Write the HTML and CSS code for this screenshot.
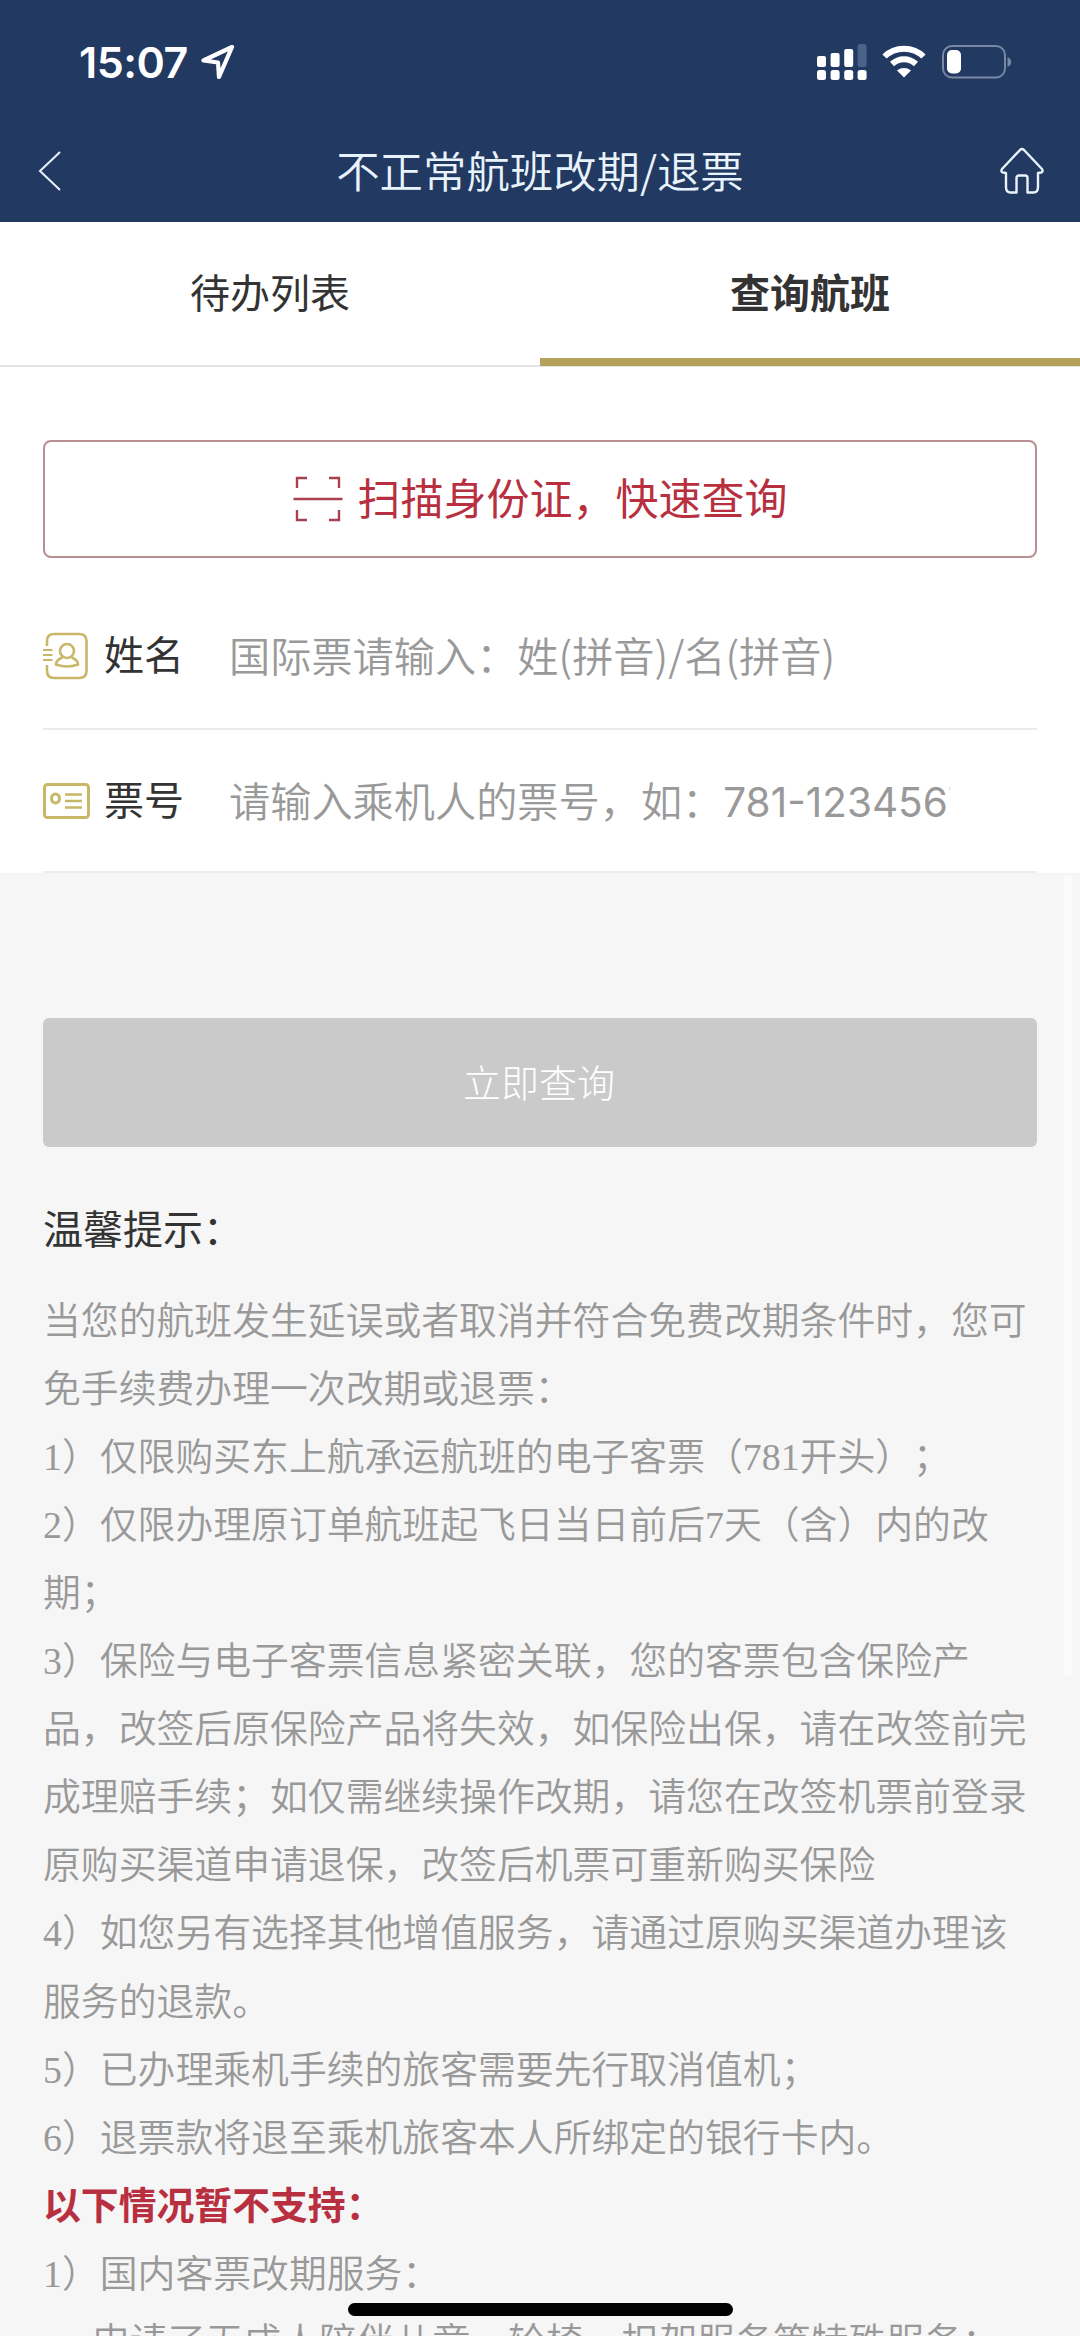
FILE: index.html
```html
<!DOCTYPE html>
<html lang="zh-CN">
<head>
<meta charset="UTF-8">
<meta name="viewport" content="width=device-width, initial-scale=1.0">
<title>不正常航班改期/退票</title>
<link rel="stylesheet" href="styles.css">
</head>
<body>

<header class="header">
  <div class="status-bar">
    <span class="time">15:07</span>
    <svg class="icon-location" width="34" height="36" viewBox="0 0 34 36" fill="none" stroke="#fff" stroke-width="4.2" stroke-linejoin="round">
      <path d="M31 3 L2.5 16.5 L17 18.5 L18 33 Z"/>
    </svg>
    <svg class="icon-signal" width="50" height="37" viewBox="0 0 50 37" fill="#fff">
      <rect x="0" y="12" width="9" height="11" rx="2"/>
      <rect x="13.6" y="9" width="9" height="14" rx="2"/>
      <rect x="27.2" y="5" width="9" height="18" rx="2"/>
      <rect x="40.6" y="0" width="9" height="23" rx="2" fill="#4a6388"/>
      <rect x="0" y="26" width="9" height="10" rx="2.5"/>
      <rect x="13.6" y="26" width="9" height="10" rx="2.5"/>
      <rect x="27.2" y="26" width="9" height="10" rx="2.5"/>
      <rect x="40.6" y="26" width="9" height="10" rx="2.5"/>
    </svg>
    <svg class="icon-wifi" width="44" height="34" viewBox="0 0 44 34" fill="none" stroke="#fff" stroke-width="6">
      <path d="M2.5 11.5 C13 1 31 1 41.5 11.5"/>
      <path d="M10 19 C17 12.5 27 12.5 34 19"/>
      <path d="M15 25.5 C19 22.2 25 22.2 29 25.5 L22 32.5 Z" fill="#fff" stroke="none"/>
    </svg>
    <svg class="icon-battery" width="70" height="34" viewBox="0 0 70 34">
      <rect x="1" y="1" width="62" height="31.5" rx="9" fill="none" stroke="#7888a6" stroke-width="2"/>
      <rect x="5" y="5" width="14" height="23.5" rx="5" fill="#fff"/>
      <path d="M65.5 12 C70.5 14 70.5 20 65.5 22 Z" fill="#7888a6"/>
    </svg>
  </div>
  <div class="nav-bar">
    <svg class="icon-back" width="24" height="42" viewBox="0 0 24 42" fill="none" stroke="#e9f3fb" stroke-width="2">
      <path d="M22 2 L2 21 L22 40"/>
    </svg>
    <h1 class="title">不正常航班改期/退票</h1>
    <svg class="icon-home" width="44" height="48" viewBox="0 0 44 48" fill="none" stroke="#e9f3fb" stroke-width="2.4" stroke-linejoin="round">
      <path d="M20 3 Q22 1.2 24 3 L42 22 Q43.5 25 41 25.5 L38 26 V40 Q38 45.5 33.5 45.5 H27.5 V31 Q27.5 28.5 25 28.5 H19 Q16.5 28.5 16.5 31 V45.5 H10.5 Q6 45.5 6 40 V26 L3 25.5 Q.5 25 2 22 Z"/>
    </svg>
  </div>
</header>

<nav class="tabs">
  <a class="tab">待办列表</a>
  <a class="tab active">查询航班</a>
</nav>

<main>
  <section class="form">
    <button class="scan-btn">
      <svg class="icon-scan" width="50" height="46" viewBox="0 0 50 46" fill="none" stroke="#a8414f" stroke-width="2.4">
        <path d="M4 12 V2 H14 M36 2 H46 V12 M46 34 V44 H36 M14 44 H4 V34 M.5 23 H49.5"/>
      </svg>
      <span class="scan-text">扫描身份证，快速查询</span>
    </button>
    <div class="field field-name">
      <svg class="icon-field" width="48" height="48" viewBox="0 0 48 48" fill="none" stroke="#c9b768" stroke-width="2.6">
        <path d="M4 14 V9 Q4 2 11 2 H36 Q43.5 2 43.5 9 V39 Q43.5 46 36 46 H11 Q4 46 4 39 V33"/>
        <path d="M0 18 H9.500 M0 23 H9.500 M0 28 H9.500" stroke-width="2"/>
        <circle cx="24" cy="19" r="7"/>
        <path d="M19.500 25.500 Q13 28 13 32.500 Q24 36.500 35 32.500 Q35 28 28.500 25.500"/>
      </svg>
      <label class="label">姓名</label>
      <div class="placeholder">国际票请输入：姓(拼音)/名(拼音)</div>
    </div>
    <div class="field field-ticket">
      <svg class="icon-field" width="48" height="36" viewBox="0 0 48 36" fill="none" stroke="#c9b768" stroke-width="3">
        <rect x="1.5" y="1.5" width="44" height="33" rx="3"/>
        <ellipse cx="12.5" cy="15.5" rx="4" ry="4.5"/>
        <path d="M22 11.5 H39 M22 18 H39 M22 24.5 H39" stroke-width="2.5"/>
      </svg>
      <label class="label">票号</label>
      <div class="placeholder">请输入乘机人的票号，如：<span class="num">781-1234567890</span></div>
    </div>
  </section>

  <button class="submit-btn">立即查询</button>

  <section class="tips">
    <h2 class="tips-title">温馨提示：</h2>
    <p>当您的航班发生延误或者取消并符合免费改期条件时，您可免手续费办理一次改期或退票：</p>
    <p>1）仅限购买东上航承运航班的电子客票（781开头）；</p>
    <p>2）仅限办理原订单航班起飞日当日前后7天（含）内的改期；</p>
    <p>3）保险与电子客票信息紧密关联，您的客票包含保险产品，改签后原保险产品将失效，如保险出保，请在改签前完成理赔手续；如仅需继续操作改期，请您在改签机票前登录原购买渠道申请退保，改签后机票可重新购买保险</p>
    <p>4）如您另有选择其他增值服务，请通过原购买渠道办理该服务的退款。</p>
    <p>5）已办理乘机手续的旅客需要先行取消值机；</p>
    <p>6）退票款将退至乘机旅客本人所绑定的银行卡内。</p>
    <p class="warning">以下情况暂不支持：</p>
    <p>1）国内客票改期服务：</p>
    <p class="sub-item">申请了无成人陪伴儿童、轮椅、担架服务等特殊服务：</p>
  </section>
</main>

<div class="scrollbar"></div>
<div class="home-indicator"></div>

</body>
</html>
```
FILE: styles.css
```css
* {
  box-sizing: border-box;
}

body {
  margin: 0;
  width: 1080px;
  height: 2336px;
  overflow: hidden;
  position: relative;
  background-color: #f6f6f6;
  color: #333;
  font-family: "Noto Sans CJK SC", sans-serif;
  text-spacing-trim: space-all;
}

svg {
  display: block;
  flex: none;
}

/* Header */
.header {
  height: 222px;
  background-color: #223962;
  color: #fff;
}

.status-bar {
  height: 120px;
  padding: 4px 68px 0 79px;
  display: flex;
  align-items: center;
}

.time {
  font-family: Inter, sans-serif;
  font-size: 43px;
  font-weight: 600;
  letter-spacing: -0.5px;
}

.icon-location {
  margin-left: 13px;
}

.icon-signal {
  margin-left: auto;
}

.icon-wifi {
  margin-left: 15px;
}

.icon-battery {
  margin-left: 16px;
}

.nav-bar {
  height: 102px;
  padding: 0 36px 0 38px;
  display: flex;
  align-items: center;
  justify-content: space-between;
}

.title {
  margin: 0 0 5px 18px;
  font-size: 43.4px;
  font-weight: 350;
  line-height: 60px;
  color: #e9f3fb;
}

/* Tabs */
.tabs {
  display: flex;
  height: 145px;
  background-color: #fff;
  border-bottom: 2px solid #e4e4e4;
}

.tab {
  flex: 1;
  height: 144px;
  padding-top: 39px;
  text-align: center;
  font-size: 40px;
  line-height: 60px;
}

.tab.active {
  font-weight: 700;
  border-bottom: 8px solid #b5a05c;
}

/* Query form */
.form {
  height: 506px;
  padding: 73px 43px 0;
  background-color: #fff;
}

.scan-btn {
  width: 100%;
  height: 118px;
  padding: 0;
  display: flex;
  align-items: center;
  justify-content: center;
  gap: 15px;
  background: #fff;
  border: 2px solid #b98f94;
  border-radius: 8px;
  color: #b8303f;
  font-family: inherit;
  font-size: 43px;
  line-height: 60px;
}

.scan-text {
  margin-bottom: 6px;
}

.field {
  display: flex;
  align-items: center;
  border-bottom: 2px solid #ebebeb;
}

.field-name {
  height: 172px;
  padding-top: 25px;
}

.field-ticket {
  height: 143px;
}

.icon-field {
  width: 48px;
}

.label {
  width: 125px;
  margin: 0 0 6px 13px;
  font-size: 40px;
}

.placeholder {
  width: 721px;
  margin-bottom: 4px;
  overflow: hidden;
  white-space: nowrap;
  font-size: 41.200px;
  font-weight: 350;
  color: #999;
}

.num {
  font-family: Inter, sans-serif;
  font-size: 40.500px;
  font-weight: 400;
}

/* Submit */
.submit-btn {
  display: block;
  width: 994px;
  height: 129px;
  margin: 145px 43px 0;
  padding: 0 2px 5px 0;
  border: none;
  border-radius: 6px;
  background-color: #cacaca;
  color: #fff;
  font-family: inherit;
  font-size: 38px;
  font-weight: 300;
}

/* Tips */
.tips {
  padding: 0 43px;
  font-family: "Liberation Serif", "Noto Sans CJK SC", serif;
  font-size: 37.85px;
  font-weight: 350;
  line-height: 68.05px;
  color: #999;
}

.tips-title {
  margin: 0;
  padding: 50px 0 22px;
  font-size: 40px;
  font-weight: 400;
  color: #333;
}

.tips p {
  margin: 0;
}

.tips .warning {
  font-weight: 700;
  color: #b8303f;
}

.tips .sub-item {
  padding-left: 49px;
  white-space: nowrap;
}

.scrollbar {
  position: absolute;
  top: 875px;
  left: 1064px;
  width: 8px;
  height: 802px;
  border-radius: 4px;
  background-color: #fbfbfb;
}

/* iOS home indicator */
.home-indicator {
  position: absolute;
  left: 348px;
  bottom: 20px;
  width: 385px;
  height: 13px;
  border-radius: 7px;
  background-color: #000;
}
```
